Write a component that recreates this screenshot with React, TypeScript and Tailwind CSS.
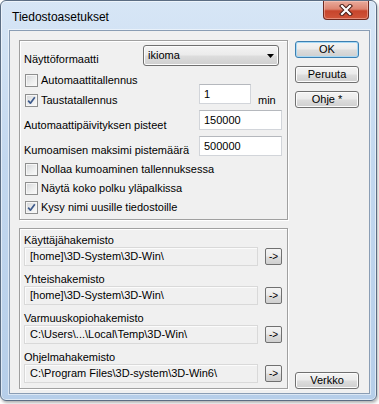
import React from "react";

const font = { fontFamily: '"Liberation Sans", Arial, sans-serif' };

const Check = ({ checked }: { checked?: boolean }) => (
  <span className="w-[13px] h-[13px] shrink-0 border border-[#8e8f8f] bg-[linear-gradient(135deg,#d3d5d8_0%,#eceded_55%,#fbfbfb_100%)] shadow-[inset_0_0_0_1px_#f6f6f6] flex items-center justify-center">
    {checked && (
      <svg width="9" height="9" viewBox="0 0 9 9">
        <path d="M1.2 4.6 L3.4 7.2 L7.8 1.2" fill="none" stroke="#3d5a8c" strokeWidth="1.7" strokeLinejoin="round" />
      </svg>
    )}
  </span>
);

const CheckRow = ({ label, checked, h = "h-[19px]" }: { label: string; checked?: boolean; h?: string }) => (
  <div className={`${h} flex items-center gap-[2px] pl-[5px]`}>
    <Check checked={checked} />
    <span className="ml-[1px] leading-[15px]">{label}</span>
  </div>
);

const Field = ({ value, w }: { value: string; w: string }) => (
  <div className={`${w} h-[20px] shrink-0 bg-white border border-[#d2d5da] border-t-[#b5b8bd] flex items-center pl-[4px] leading-none`}>
    {value}
  </div>
);

const btnBg = "bg-[linear-gradient(to_bottom,#f4f4f4_0%,#ebebeb_48%,#dddddd_52%,#cfcfcf_100%)]";

const Btn = ({ label, primary }: { label: string; primary?: boolean }) => (
  <div
    className={`h-[17px] w-full rounded-[3px] border flex items-center justify-center leading-none ${btnBg} ${
      primary ? "border-[#3c7fb1] shadow-[inset_0_0_0_1px_#a6d9f6]" : "border-[#707070] shadow-[inset_0_0_0_1px_#fcfcfc]"
    }`}
  >
    {label}
  </div>
);

const PathRow = ({ label, value }: { label: string; value: string }) => (
  <div className="flex flex-col">
    <div className="h-[14px] leading-[14px] pl-[4px]">{label}</div>
    <div className="h-[19px] flex items-center pl-[4px]">
      <div className="w-[234px] h-[19px] border border-[#d9d9d9] bg-[#f0f0f0] shadow-[inset_1px_1px_0_#fbfbfb] flex items-center pl-[5px] leading-none whitespace-nowrap">
        {value}
      </div>
      <div className={`ml-[7px] w-[17px] h-[17px] rounded-[2px] border border-[#707070] ${btnBg} flex items-center justify-center text-[10px] leading-none`}>
        -&gt;
      </div>
    </div>
  </div>
);

export default function App() {
  return (
    <div className="w-[379px] h-[404px] bg-white text-[11px] text-black" style={font}>
      <div className="w-[377px] h-[401px] rounded-[6px] border border-[#5b6d83] bg-[linear-gradient(to_bottom,#d7e6f6_0%,#c3d8ef_40%,#b6cee9_100%)] shadow-[inset_0_0_0_1px_rgba(255,255,255,0.55),1px_2px_3px_rgba(0,0,0,0.3)] flex flex-col">
        {/* title bar */}
        <div className="h-[29px] flex items-start shrink-0">
          <div className="pl-[11px] pt-[9px] text-[12px] leading-[15px]">Tiedostoasetukset</div>
          <div className="ml-auto mr-[7px] mt-0 w-[46px] h-[19px] rounded-b-[4px] border border-t-0 border-[#6f2a20] bg-[linear-gradient(to_bottom,#e9ab9c_0%,#dd8470_45%,#c7452c_55%,#d0553a_100%)] shadow-[inset_0_0_0_1px_rgba(255,210,200,0.45)] flex items-center justify-center">
            <svg width="14" height="12" viewBox="0 0 14 12">
              <path d="M3 2 L11 10 M11 2 L3 10" stroke="#4a1d16" strokeWidth="4.2" strokeLinecap="square" />
              <path d="M3 2 L11 10 M11 2 L3 10" stroke="#ffffff" strokeWidth="2.2" strokeLinecap="square" />
            </svg>
          </div>
        </div>

        {/* client area */}
        <div className="flex-1 ml-[8px] mr-[6px] mb-[6px] border border-[#8a9db4] bg-[#f0f0f0] shadow-[0_0_0_1px_rgba(255,255,255,0.5)] flex">
          <div className="flex flex-col pl-[9px] pt-[9px]">
            {/* group 1 */}
            <div className="w-[269px] h-[180px] border border-[#a0a0a0] shadow-[inset_1px_1px_0_#fff,1px_1px_0_#fff] flex flex-col">
              <div className="mt-[4px] h-[21px] flex">
                <div className="w-[123px] pl-[4px] self-end leading-[15px] -mb-[1px]">Näyttöformaatti</div>
                <div className={`w-[136px] h-[21px] rounded-[3px] border border-[#707070] ${btnBg} shadow-[inset_0_0_0_1px_#fcfcfc] flex items-center pl-[4px] pr-[4px]`}>
                  <span className="leading-none -mt-[1px]">ikioma</span>
                  <svg className="ml-auto" width="7" height="4" viewBox="0 0 7 4">
                    <path d="M0 0 H7 L3.5 4 Z" fill="#000" />
                  </svg>
                </div>
              </div>
              <div className="mt-[4px]">
                <CheckRow label="Automaattitallennus" h="h-[20px]" />
              </div>
              <div className="-mt-[6px] h-[26px] flex">
                <div className="w-[179px] self-end">
                  <CheckRow label="Taustatallennus" checked h="h-[20px]" />
                </div>
                <div className="self-start">
                  <Field value="1" w="w-[52px]" />
                </div>
                <div className="self-end h-[20px] flex items-center pl-[7px]">min</div>
              </div>
              <div className="h-[23px] flex">
                <div className="w-[179px] pl-[4px] self-end leading-[15px]">Automaattipäivityksen pisteet</div>
                <div className="self-start">
                  <Field value="150000" w="w-[83px]" />
                </div>
              </div>
              <div className="mt-[3px] h-[22px] flex">
                <div className="w-[179px] pl-[4px] self-end leading-[15px]">Kumoamisen maksimi pistemäärä</div>
                <div className="self-start">
                  <Field value="500000" w="w-[83px]" />
                </div>
              </div>
              <div className="mt-[2px]">
                <CheckRow label="Nollaa kumoaminen tallennuksessa" />
                <CheckRow label="Näytä koko polku yläpalkissa" />
                <CheckRow label="Kysy nimi uusille tiedostoille" checked />
              </div>
            </div>

            {/* group 2 */}
            <div className="mt-[8px] w-[269px] h-[161px] border border-[#a0a0a0] shadow-[inset_1px_1px_0_#fff,1px_1px_0_#fff] flex flex-col gap-[6px] pt-[4px]">
              <PathRow label="Käyttäjähakemisto" value="[home]\3D-System\3D-Win\" />
              <PathRow label="Yhteishakemisto" value="[home]\3D-System\3D-Win\" />
              <PathRow label="Varmuuskopiohakemisto" value="C:\Users\...\Local\Temp\3D-Win\" />
              <PathRow label="Ohjelmahakemisto" value="C:\Program Files\3D-system\3D-Win6\" />
            </div>
          </div>

          {/* buttons */}
          <div className="ml-[7px] w-[64px] flex flex-col pt-[10px] pb-[4px]">
            <Btn label="OK" primary />
            <div className="mt-[8px]">
              <Btn label="Peruuta" />
            </div>
            <div className="mt-[8px]">
              <Btn label="Ohje *" />
            </div>
            <div className="mt-auto">
              <Btn label="Verkko" />
            </div>
          </div>
        </div>
      </div>
    </div>
  );
}
